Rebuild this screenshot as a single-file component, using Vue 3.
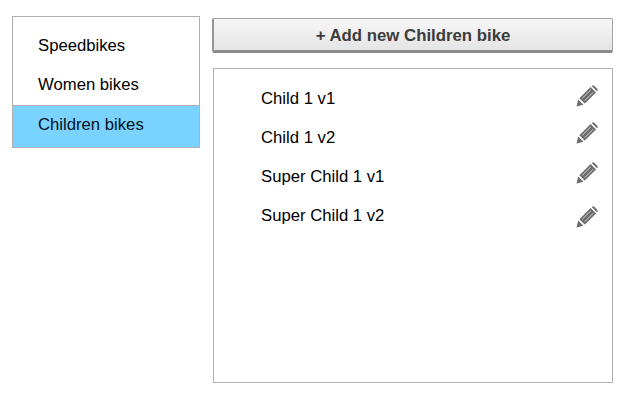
<script setup>
const categories = [
  { name: 'Speedbikes', active: false },
  { name: 'Women bikes', active: false },
  { name: 'Children bikes', active: true }
]
const bikes = [
  { name: 'Child 1 v1', shift: 0 },
  { name: 'Child 1 v2', shift: -2 },
  { name: 'Super Child 1 v1', shift: -1 },
  { name: 'Super Child 1 v2', shift: 4 }
]
</script>

<template>
  <div class="page">
    <ul class="sidebar">
      <li v-for="c in categories" :key="c.name" class="cat" :class="{ active: c.active }">{{ c.name }}</li>
    </ul>
    <main class="main">
      <button class="add" type="button">+ Add new Children bike</button>
      <ul class="list">
        <li v-for="b in bikes" :key="b.name" class="row">
          <span>{{ b.name }}</span>
          <svg class="pencil" :style="{ transform: `translateY(${b.shift}px)` }" viewBox="0 0 22 22" width="22" height="22" aria-hidden="true">
            <path d="M0.5 21.5 L2.2 14.6 L7.4 19.8 Z M3.4 13.2 L14.6 2 L20 7.4 L8.8 18.6 Z M15.8 0.9 Q17 -0.2 18.2 0.7 L21.2 3.7 Q22.1 5 21.1 6.2 L21 6.3 L15.7 1 Z" fill="#6b6b6b" />
            <path d="M6.2 13.4 L14.8 4.8 M8.6 15.8 L17.2 7.2" stroke="#d8d8d8" stroke-width="1" fill="none" />
          </svg>
        </li>
      </ul>
    </main>
  </div>
</template>

<style scoped>
.page {
  width: 633px;
  height: 400px;
  box-sizing: border-box;
  padding: 16px 20px 0 12px;
  display: flex;
  gap: 12px;
  font-family: "Liberation Sans", Arial, sans-serif;
  background: #fff;
  color: #000;
}
.sidebar {
  list-style: none;
  margin: 0;
  padding: 10px 0 0;
  width: 188px;
  height: 132px;
  box-sizing: border-box;
  border: 1px solid #b0b0b0;
  flex: none;
}
.cat {
  height: 39px;
  line-height: 37px;
  padding-left: 25px;
  font-size: 16.7px;
}
.cat.active {
  background: #7ad2ff;
  height: 42px;
  line-height: 37px;
  border-top: 1px solid #b0b0b0;
  box-sizing: border-box;
  color: #04121c;
}
.main {
  flex: 1;
  display: flex;
  flex-direction: column;
  padding-top: 2px;
  min-width: 0;
}
.add {
  height: 35px;
  width: 401px;
  box-sizing: border-box;
  border: 1px solid #a2a2a2;
  border-left: 2px solid #969696;
  border-bottom: 3px solid #8a8a8a;
  border-radius: 2px;
  background: linear-gradient(#f7f7f7, #e4e4e4);
  color: #3c3c3c;
  font: bold 16.8px "Liberation Sans", Arial, sans-serif;
  padding: 2px 0 0;
}
.list {
  list-style: none;
  margin: 15px 0 0 1px;
  padding: 10px 14px 0 47px;
  width: 400px;
  height: 315px;
  box-sizing: border-box;
  border: 1px solid #b0b0b0;
}
.row {
  height: 39px;
  display: flex;
  align-items: center;
  justify-content: space-between;
  font-size: 16.7px;
}
.pencil {
  flex: none;
  margin-top: -6px;
}
</style>
